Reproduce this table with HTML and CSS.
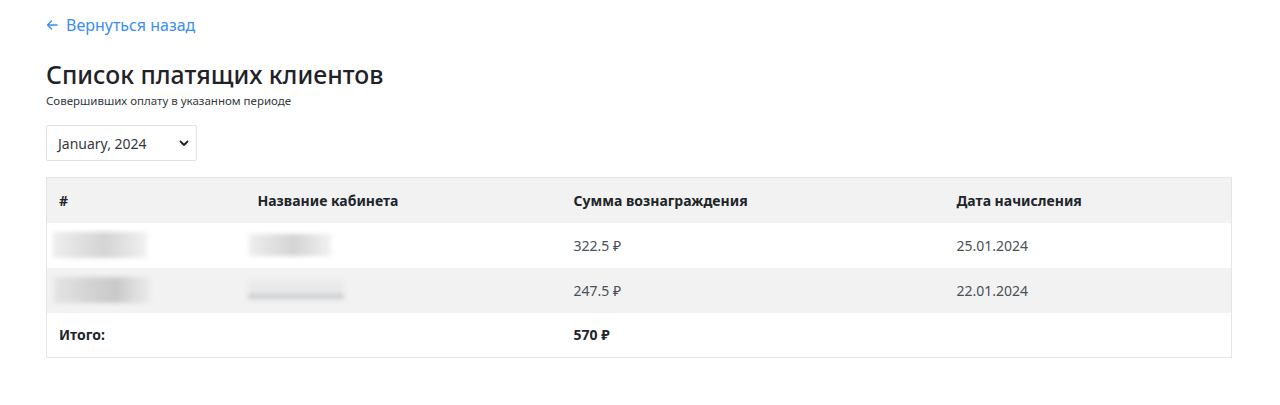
FILE: index.html
```html
<!DOCTYPE html>
<html lang="ru">
<head>
<meta charset="utf-8">
<title>Список платящих клиентов</title>
<link rel="stylesheet" href="styles.css">
</head>
<body>
<div class="page">
  <a class="back" href="#">
    <svg class="back-icon" width="12" height="12" viewBox="0 0 12 12" aria-hidden="true"><path d="M11 6H1.5M5.5 2L1.5 6l4 4" fill="none" stroke="currentColor" stroke-width="1.4" stroke-linecap="round" stroke-linejoin="round"/></svg>
    <span>Вернуться назад</span>
  </a>
  <h1 class="title">Список платящих клиентов</h1>
  <p class="subtitle">Совершивших оплату в указанном периоде</p>
  <div class="select">
    <span>January, 2024</span>
    <svg width="10" height="7" viewBox="0 0 10 7" aria-hidden="true"><path d="M1.5 1.5L5 5l3.5-3.5" fill="none" stroke="#222" stroke-width="1.8" stroke-linecap="round" stroke-linejoin="round"/></svg>
  </div>
  <table class="table">
    <colgroup>
      <col class="c1"><col class="c2"><col class="c3"><col class="c4">
    </colgroup>
    <thead>
      <tr><th>#</th><th>Название кабинета</th><th>Сумма вознаграждения</th><th>Дата начисления</th></tr>
    </thead>
    <tbody>
      <tr>
        <td><div class="blur b1"></div></td>
        <td><div class="blur b2"></div></td>
        <td>322.5 ₽</td>
        <td>25.01.2024</td>
      </tr>
      <tr class="alt">
        <td><div class="blur b3"></div></td>
        <td><div class="blur b4"></div></td>
        <td>247.5 ₽</td>
        <td>22.01.2024</td>
      </tr>
    </tbody>
    <tfoot>
      <tr><td>Итого:</td><td></td><td>570 ₽</td><td></td></tr>
    </tfoot>
  </table>
</div>
</body>
</html>
```
FILE: styles.css
```css
html, body { margin: 0; padding: 0; background: #fff; }
body { font-family: "Noto Sans", "Open Sans", sans-serif; color: #212529; }
.page { padding: 14px 49px 0 46px; }
.back { display: inline-flex; align-items: center; gap: 8px; color: #3a8ef0; text-decoration: none; font-size: 16px; line-height: 22px; }
.back-icon { color: #3a8ef0; }
.title { margin: 22px 0 0; font-size: 24.8px; font-weight: 500; line-height: 32px; color: #1f2226; }
.subtitle { margin: 4px 0 0; font-size: 11.5px; line-height: 14px; color: #343a40; }
.select { margin-top: 17px; width: 151px; height: 36px; box-sizing: border-box; border: 1px solid #dee2e6; border-radius: 2px; display: flex; align-items: center; justify-content: space-between; padding: 0 7px 0 11px; font-size: 14px; color: #343a40; }
.table { margin-top: 16px; width: 1185px; border-collapse: collapse; border: 1px solid #e3e5e8; table-layout: fixed; font-size: 14px; }
.c1 { width: 199px; } .c2 { width: 316px; } .c3 { width: 383px; } .c4 { width: 287px; }
.table th, .table td { height: 45px; box-sizing: border-box; padding: 0 12px; text-align: left; vertical-align: middle; }
.table th { font-weight: 700; color: #212529; background: #f2f2f2; }
.table tbody td { color: #495057; }
.table tbody tr.alt td { background: #f2f2f2; }
.table tfoot td { font-weight: 700; color: #212529; }
.blur { height: 26px; filter: blur(2px); background: linear-gradient(90deg, #eee 0%, #e2e2e2 25%, #d4d4d4 55%, #e4e4e4 80%, #f2f2f2 100%); }
.b1 { width: 94px; margin-left: -6px; }
.b2 { width: 82px; margin-left: -9px; height: 22px; }
.b3 { width: 96px; margin-left: -5px; background: linear-gradient(90deg, #e4e4e4 0%, #d2d2d2 40%, #c9c9c9 65%, #dedede 85%, #eaeaea 100%); }
.b4 { width: 96px; margin-left: -10px; height: 22px; background: linear-gradient(180deg, #ececec 0%, #e8e8e8 60%, #c6c9cc 80%, #f0f0f0 100%); }
```
